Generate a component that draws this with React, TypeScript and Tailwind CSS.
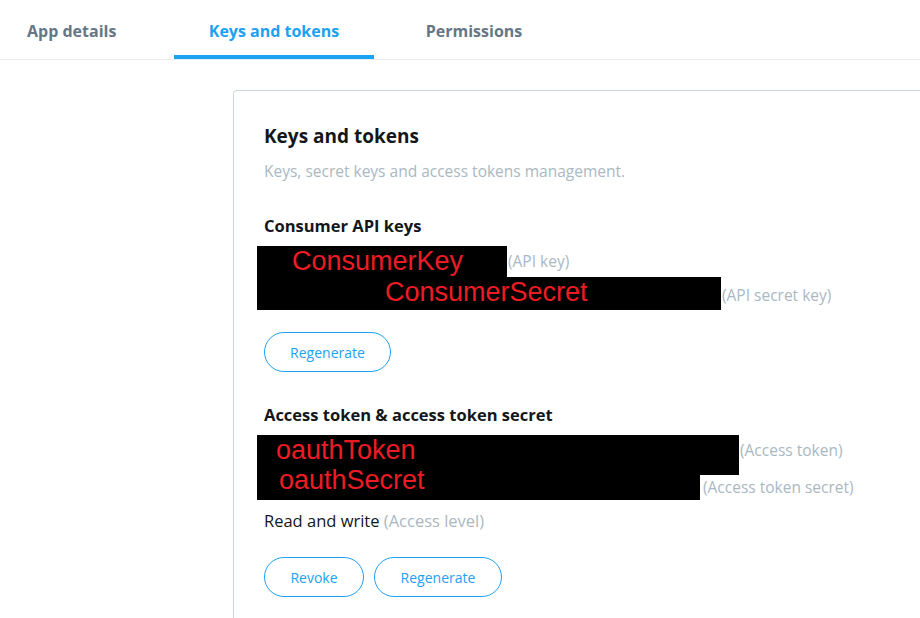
import type { ReactNode } from "react";

const font = { fontFamily: '"Open Sans", "Noto Sans", sans-serif' };

function Tab({ label, active, className }: { label: string; active?: boolean; className: string }) {
  return (
    <div
      className={`flex h-[59px] items-center pt-[7px] border-b-4 text-[16px] font-bold ${
        active ? "border-[#1da1f2] text-[#1da1f2]" : "border-transparent text-[#657786]"
      } ${className}`}
    >
      {label}
    </div>
  );
}

function Redacted({ width, height, pad, children, lift }: { width: number; height: number; pad: number; children: ReactNode; lift?: boolean }) {
  return (
    <div className="bg-black shrink-0" style={{ width, height, paddingLeft: pad }}>
      <span
        className={`block whitespace-nowrap text-[27px] text-[#ed1c24] ${lift ? "relative -top-[7px] leading-[25px]" : "leading-[31px]"}`}
        style={{ fontFamily: '"Liberation Sans", Arial, sans-serif' }}
      >
        {children}
      </span>
    </div>
  );
}

function OutlineButton({ label, width }: { label: string; width: number }) {
  return (
    <button
      type="button"
      className="h-[40px] rounded-full border border-[#1da1f2] text-[14px] text-[#1da1f2] bg-white"
      style={{ width }}
    >
      {label}
    </button>
  );
}

export default function App() {
  return (
    <div className="h-[618px] w-[920px] overflow-hidden bg-white" style={font}>
      <nav className="flex border-b border-[#e6ecf0]">
        <Tab label="App details" className="w-[154px] pl-[27px] text-[16.5px]" />
        <Tab label="Keys and tokens" active className="ml-[20px] w-[200px] justify-center" />
        <Tab label="Permissions" className="ml-[18px] w-[164px] justify-center" />
      </nav>

      <section className="ml-[233px] mt-[30px] w-[720px] h-[600px] rounded-tl-[4px] border-l border-t border-[#ccd6dd] pl-[30px] pt-[32px]">
        <h2 className="text-[19px] leading-[26px] font-bold text-[#14171a]">Keys and tokens</h2>
        <p className="mt-[11px] text-[15.5px] leading-[22px] text-[#aab8c2]">
          Keys, secret keys and access tokens management.
        </p>

        <h3 className="mt-[33px] text-[16.5px] leading-[22px] font-bold text-[#14171a]">Consumer API keys</h3>
        <div className="-ml-[7px] mt-[9px]">
          <div className="flex items-center">
            <Redacted width={250} height={31} pad={35}>ConsumerKey</Redacted>
            <span className="pl-[1px] text-[15.5px] text-[#aab8c2]">(API key)</span>
          </div>
          <div className="flex items-center">
            <Redacted width={464} height={33} pad={128}>ConsumerSecret</Redacted>
            <span className="pl-[1px] pt-[4px] text-[15.5px] text-[#aab8c2]">(API secret key)</span>
          </div>
        </div>
        <div className="mt-[22px]">
          <OutlineButton label="Regenerate" width={127} />
        </div>

        <h3 className="mt-[32px] text-[16.5px] leading-[22px] font-bold text-[#14171a]">
          Access token &amp; access token secret
        </h3>
        <div className="-ml-[7px] mt-[9px]">
          <div className="flex items-start">
            <Redacted width={482} height={40} pad={19}>oauthToken</Redacted>
            <span className="mt-[5px] pl-[1px] text-[15.5px] leading-[21px] text-[#aab8c2]">(Access token)</span>
          </div>
          <div className="flex items-center">
            <Redacted width={443} height={25} pad={22} lift>oauthSecret</Redacted>
            <span className="pl-[3px] text-[15.5px] leading-[21px] text-[#aab8c2]">(Access token secret)</span>
          </div>
        </div>
        <p className="mt-[10px] text-[16.5px] leading-[22px] text-[#14171a]">
          Read and write <span className="text-[#aab8c2]">(Access level)</span>
        </p>
        <div className="mt-[25px] flex gap-[10px]">
          <OutlineButton label="Revoke" width={100} />
          <OutlineButton label="Regenerate" width={128} />
        </div>
      </section>
    </div>
  );
}
